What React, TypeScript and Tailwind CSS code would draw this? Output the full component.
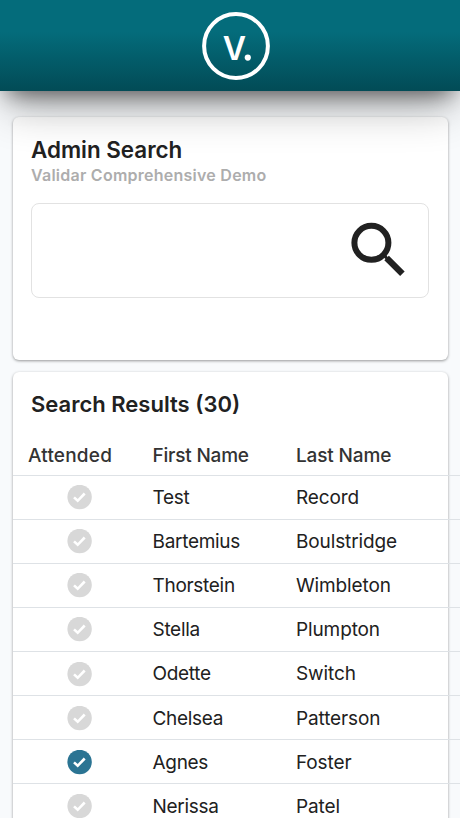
import clsx from "clsx";

const people = [
  { first: "Test", last: "Record", attended: false },
  { first: "Bartemius", last: "Boulstridge", attended: false },
  { first: "Thorstein", last: "Wimbleton", attended: false },
  { first: "Stella", last: "Plumpton", attended: false },
  { first: "Odette", last: "Switch", attended: false },
  { first: "Chelsea", last: "Patterson", attended: false },
  { first: "Agnes", last: "Foster", attended: true },
  { first: "Nerissa", last: "Patel", attended: false },
];

function Logo() {
  return (
    <svg width="70" height="70" viewBox="0 0 70 70" fill="white">
      <circle cx="35" cy="35" r="31.9" fill="none" stroke="white" strokeWidth="4" />
      <text x="33.4" y="48.8" textAnchor="middle" className="text-[32px] font-semibold">
        V
      </text>
      <circle cx="46.8" cy="46.6" r="3.1" />
    </svg>
  );
}

function SearchIcon() {
  return (
    <svg width="56" height="56" viewBox="0 0 56 56" fill="none" stroke="#212121">
      <circle cx="21.4" cy="21.8" r="17" strokeWidth="6" />
      <path d="M34 34.4L37 37.4" strokeWidth="3" />
      <path d="M36.6 37L52.4 52.8" strokeWidth="6.4" />
    </svg>
  );
}

function Check({ on }: { on: boolean }) {
  return (
    <svg
      width="25"
      height="25"
      viewBox="0 0 25 25"
      fill="none"
      className={clsx(on ? "text-[#2b7493]" : "text-[#d8d8d8]")}
    >
      <circle cx="12.6" cy="12" r="12.2" fill="currentColor" />
      <path d="M7 12.4L10.7 15.8L17.7 8.5" stroke="white" strokeWidth="2.6" />
    </svg>
  );
}

export default function App() {
  return (
    <div className="h-[818px] w-full overflow-hidden bg-[#f8fafc] font-['Inter',sans-serif] text-[#212121]">
      <header className="relative z-10 flex h-[91px] justify-center bg-linear-to-b from-[#046c7b] from-35% to-[#024b56] pt-[11px] pl-3 shadow-[0_22px_44px_-6px_rgba(0,0,0,0.3),0_10px_22px_-8px_rgba(0,0,0,0.58)]">
        <Logo />
      </header>
      <main className="flex flex-col gap-3 pt-[26px] pr-[12.5px] pl-[12.5px]">
        <section className="h-[242.5px] rounded-md bg-white px-[18.5px] pt-[18px] shadow-[0_1px_3px_rgba(0,0,0,0.4)]">
          <h1 className="text-[22.4px] leading-[30px] font-semibold">Admin Search</h1>
          <p className="text-base leading-5 font-semibold tracking-[0.25px] text-[#adadad]">
            Validar Comprehensive Demo
          </p>
          <div className="mt-[18px] flex h-[95px] w-[398px] justify-end rounded-lg border border-[#e2e2e2] pt-[17px] pr-[22px]">
            <SearchIcon />
          </div>
        </section>
        <section className="h-[520px] rounded-md bg-white shadow-[0_1px_3px_rgba(0,0,0,0.4)]">
          <h2 className="h-[65.5px] pt-[17px] pl-[18.5px] text-[22px] leading-[30px] font-semibold">
            Search Results (30)
          </h2>
          <div className="w-[460px] text-[19px]">
            <div className="grid h-[38.5px] grid-cols-[140px_143.5px_1fr] items-center border-b border-[#dee2e6] font-medium text-[#333]">
              <span className="pl-[15.5px] tracking-[0.2px]">Attended</span>
              <span className="tracking-[-0.2px]">First Name</span>
              <span className="tracking-[-0.15px]">Last Name</span>
            </div>
            {people.map((person) => (
              <div
                key={person.first}
                className="grid h-[44.15px] grid-cols-[140px_143.5px_1fr] items-center border-b border-[#dee2e6] pt-px tracking-[-0.3px]"
              >
                <span className="pl-[54.5px]">
                  <Check on={person.attended} />
                </span>
                <span className="pt-px">{person.first}</span>
                <span className="pt-px tracking-[-0.12px]">{person.last}</span>
              </div>
            ))}
          </div>
        </section>
      </main>
    </div>
  );
}
